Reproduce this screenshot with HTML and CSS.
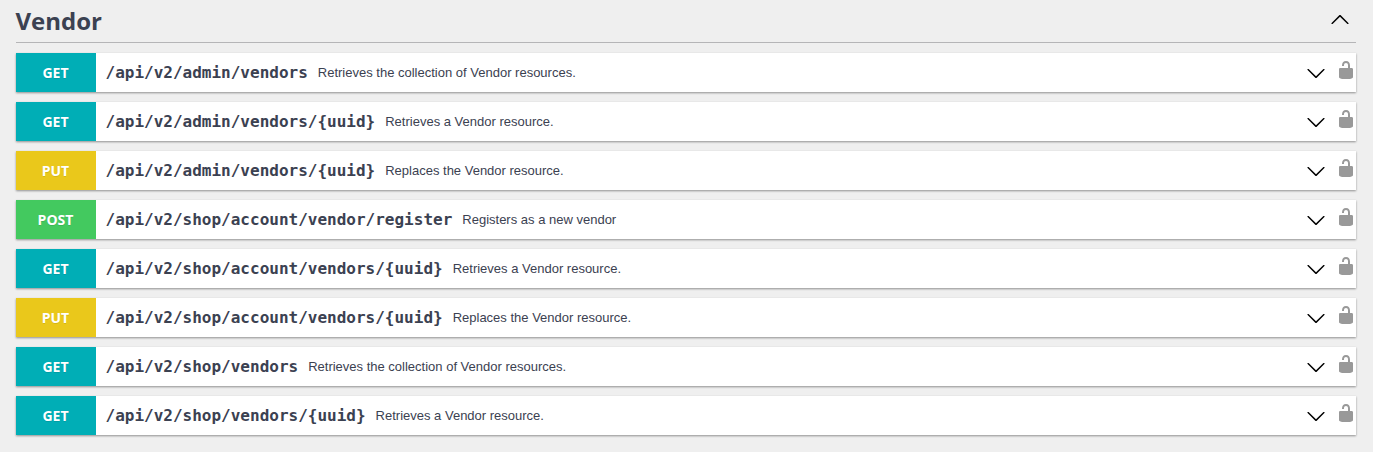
FILE: index.html
```html
<!DOCTYPE html>
<html lang="en">
<head>
<meta charset="utf-8">
<title>Vendor</title>
<link rel="stylesheet" href="styles.css">
</head>
<body>
<svg width="0" height="0" class="defs">
<symbol id="arrow" viewBox="0 0 20 20"><path d="M17.418 6.109c.272-.268.709-.268.979 0s.271.701 0 .969l-7.908 7.83c-.27.268-.707.268-.979 0l-7.908-7.83c-.27-.268-.27-.701 0-.969.271-.268.709-.268.979 0L10 13.25l7.418-7.141z"/></symbol>
<symbol id="unlocked" viewBox="0 0 20 20"><path d="M15.8 8H14V5.6C14 2.703 12.665 1 10 1 7.334 1 6 2.703 6 5.6V6h2v-.801C8 3.754 8.797 3 10 3c1.203 0 2 .754 2 2.199V8H4c-.553 0-1 .646-1 1.199V17c0 .549.428 1.139.951 1.307l1.197.387C5.672 18.861 6.55 19 7.1 19h5.8c.549 0 1.428-.139 1.951-.307l1.196-.387c.524-.167.953-.757.953-1.306V9.199C17 8.646 16.352 8 15.8 8z"/></symbol>
</svg>
<main class="section">
<header class="tag"><h3 class="tag-name">Vendor</h3><svg class="arrow up"><use href="#arrow"/></svg></header>
<div class="op"><span class="method get">GET</span><span class="path">/api/v2/admin/vendors</span><span class="desc">Retrieves the collection of Vendor resources.</span><svg class="arrow"><use href="#arrow"/></svg><svg class="lock"><use href="#unlocked"/></svg></div>
<div class="op"><span class="method get">GET</span><span class="path">/api/v2/admin/vendors/{uuid}</span><span class="desc">Retrieves a Vendor resource.</span><svg class="arrow"><use href="#arrow"/></svg><svg class="lock"><use href="#unlocked"/></svg></div>
<div class="op"><span class="method put">PUT</span><span class="path">/api/v2/admin/vendors/{uuid}</span><span class="desc">Replaces the Vendor resource.</span><svg class="arrow"><use href="#arrow"/></svg><svg class="lock"><use href="#unlocked"/></svg></div>
<div class="op"><span class="method post">POST</span><span class="path">/api/v2/shop/account/vendor/register</span><span class="desc">Registers as a new vendor</span><svg class="arrow"><use href="#arrow"/></svg><svg class="lock"><use href="#unlocked"/></svg></div>
<div class="op"><span class="method get">GET</span><span class="path">/api/v2/shop/account/vendors/{uuid}</span><span class="desc">Retrieves a Vendor resource.</span><svg class="arrow"><use href="#arrow"/></svg><svg class="lock"><use href="#unlocked"/></svg></div>
<div class="op"><span class="method put">PUT</span><span class="path">/api/v2/shop/account/vendors/{uuid}</span><span class="desc">Replaces the Vendor resource.</span><svg class="arrow"><use href="#arrow"/></svg><svg class="lock"><use href="#unlocked"/></svg></div>
<div class="op"><span class="method get">GET</span><span class="path">/api/v2/shop/vendors</span><span class="desc">Retrieves the collection of Vendor resources.</span><svg class="arrow"><use href="#arrow"/></svg><svg class="lock"><use href="#unlocked"/></svg></div>
<div class="op"><span class="method get">GET</span><span class="path">/api/v2/shop/vendors/{uuid}</span><span class="desc">Retrieves a Vendor resource.</span><svg class="arrow"><use href="#arrow"/></svg><svg class="lock"><use href="#unlocked"/></svg></div>
</main>
</body>
</html>
```
FILE: styles.css
```css
* { box-sizing: border-box; }
body { margin: 0; background: #efefef; color: #3b4151; overflow: hidden; }
.defs { display: none; }
.section { padding: 0 17px 0 15.5px; }
.tag { display: flex; align-items: center; height: 43px; margin-bottom: 10px; padding-right: 6px; border-bottom: 1px solid #b5b5b7; }
.tag-name { flex: 1; margin: 0; font: 700 24px/42px "Open Sans", sans-serif; }
.arrow { width: 20px; height: 20px; flex: none; fill: #000; }
.up { margin-top: -2px; transform: rotate(180deg); }
.op { display: flex; align-items: center; height: 39px; margin-bottom: 10px; background: #fff; box-shadow: 0 1px 2px rgba(0, 0, 0, .4); }
.method { width: 80px; height: 39px; flex: none; color: #fff; font: 700 14px/39px "Open Sans", sans-serif; text-align: center; text-shadow: 0 1px 0 rgba(0, 0, 0, .1); }
.get { background: #00aeb6; }
.put { background: #eac81b; }
.post { background: #43c95f; }
.path { padding: 0 10px; font: 700 16px/19px "DejaVu Sans Mono", monospace; }
.desc { flex: 1; font: 13px/15px "Liberation Sans", sans-serif; }
.lock { width: 20px; height: 20px; flex: none; margin: -5px 0 0 10px; fill: #999; }
```
